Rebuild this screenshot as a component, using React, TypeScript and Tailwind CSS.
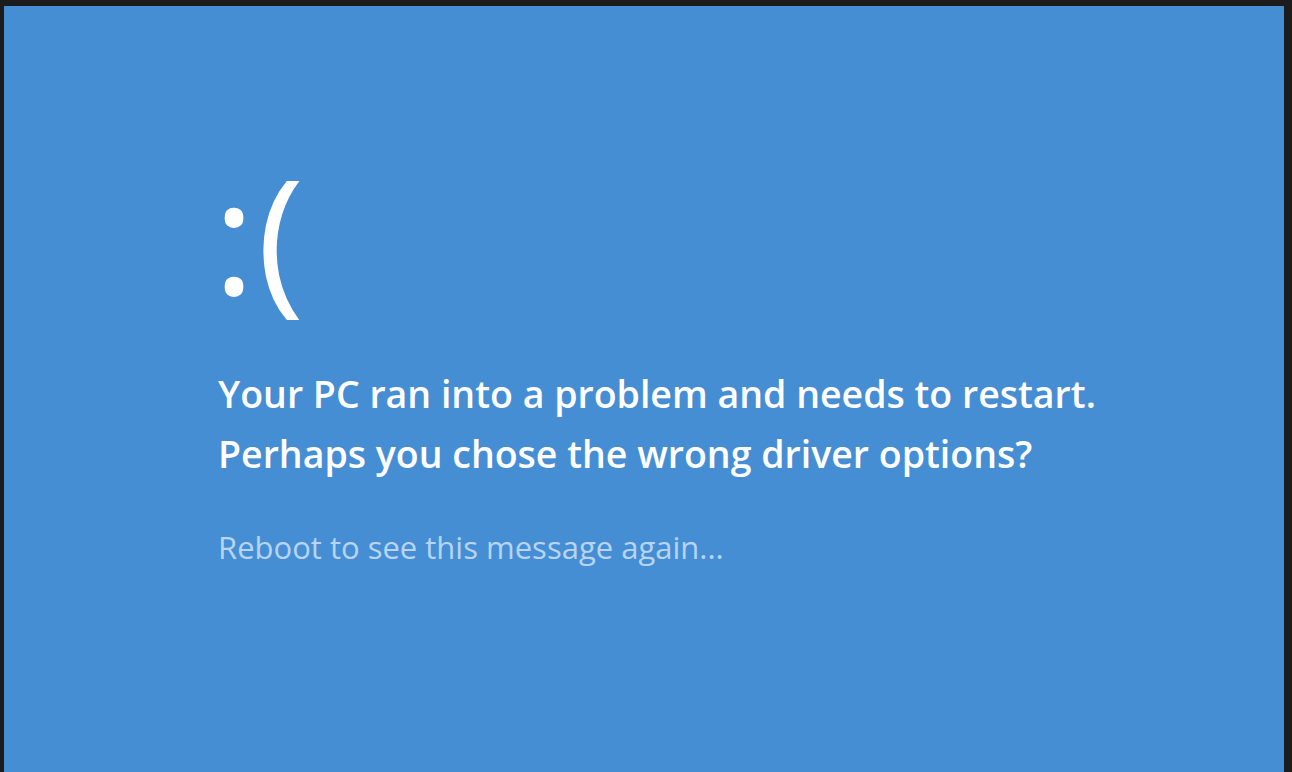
export default function App() {
  return (
    <div className="w-[1292px] h-[772px] bg-[#1c1c1c] pt-[6px] pl-[4px] pr-[8px] flex">
      <div className="flex-1 bg-[#468ed4] pl-[205px] pt-[132px] flex flex-col" style={{ fontFamily: '"Open Sans", sans-serif' }}>
        <div className="text-white font-normal text-[160px] leading-[190px] h-[190px] tracking-[2px] pl-[4px]">:(</div>
        <div className="mt-[36px] text-white font-semibold text-[37.5px] leading-[60px] pl-[9px]">
          <div>Your PC ran into a problem and needs to restart.</div>
          <div>Perhaps you chose the wrong driver options?</div>
        </div>
        <div className="mt-[43px] text-[#b7d4f2] text-[31px] leading-[40px] pl-[9px]">Reboot to see this message again...</div>
      </div>
    </div>
  );
}
